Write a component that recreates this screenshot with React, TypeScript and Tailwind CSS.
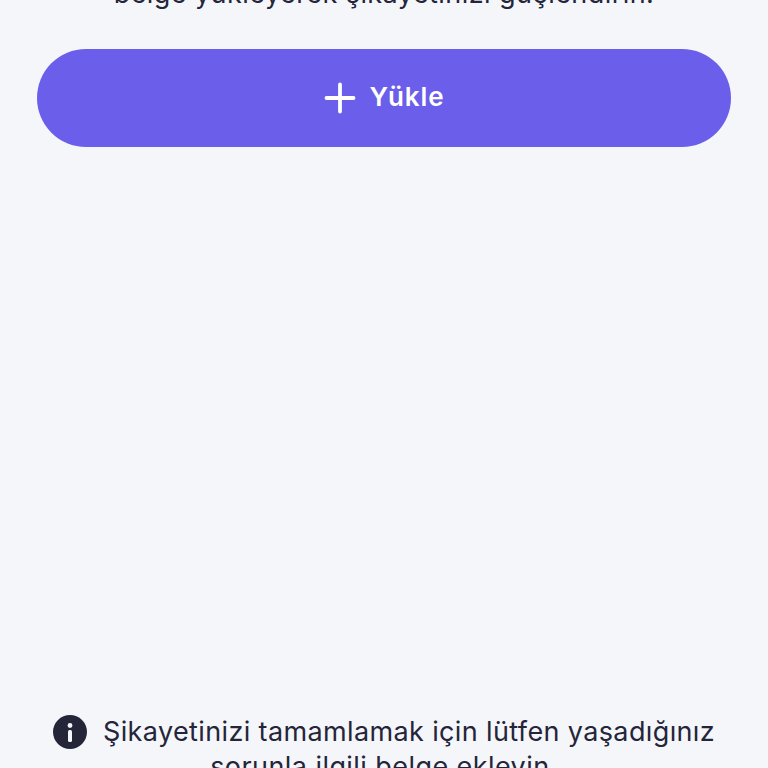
function PlusIcon() {
  return (
    <svg viewBox="0 0 32 32" className="w-[32px] h-[32px] shrink-0" fill="none" stroke="#ffffff" strokeWidth="3.8" strokeLinecap="round">
      <path d="M16 2.5v27M2.5 16h27" />
    </svg>
  );
}

function InfoIcon() {
  return (
    <svg viewBox="0 0 34 34" className="w-[34px] h-[34px] shrink-0">
      <circle cx="17" cy="17" r="17" fill="#25253a" />
      <circle cx="17" cy="10.5" r="2.4" fill="#f4f6fa" />
      <rect x="15" y="15" width="4" height="12" rx="1.5" fill="#f4f6fa" />
    </svg>
  );
}

export default function App() {
  return (
    <div className="h-[768px] w-[768px] overflow-hidden flex flex-col bg-[#f4f6fa] text-[#25253a] font-['Inter',sans-serif]">
      <p className="mt-[-24px] h-[36px] text-center text-[27px] leading-[36px] tracking-[0.43px] whitespace-nowrap">
        belge yükleyerek şikayetinizi güçlendirin.
      </p>

      <button className="mx-[37px] mt-[37px] h-[98px] shrink-0 rounded-[50px] bg-[#6b5eea] flex items-center justify-center gap-[14px] text-white">
        <PlusIcon />
        <span className="text-[26px] font-semibold tracking-[0.9px] leading-[36px] mb-[2px]">Yükle</span>
      </button>

      <div className="mt-auto mb-[-16px] px-[53px]">
        <div className="flex items-center gap-[16px]">
          <InfoIcon />
          <span className="text-[27px] leading-[36px] tracking-[0.37px] whitespace-nowrap">Şikayetinizi tamamlamak için lütfen yaşadığınız</span>
        </div>
        <p className="text-center text-[27px] leading-[34px] tracking-[0.43px]">sorunla ilgili belge ekleyin.</p>
      </div>
    </div>
  );
}
